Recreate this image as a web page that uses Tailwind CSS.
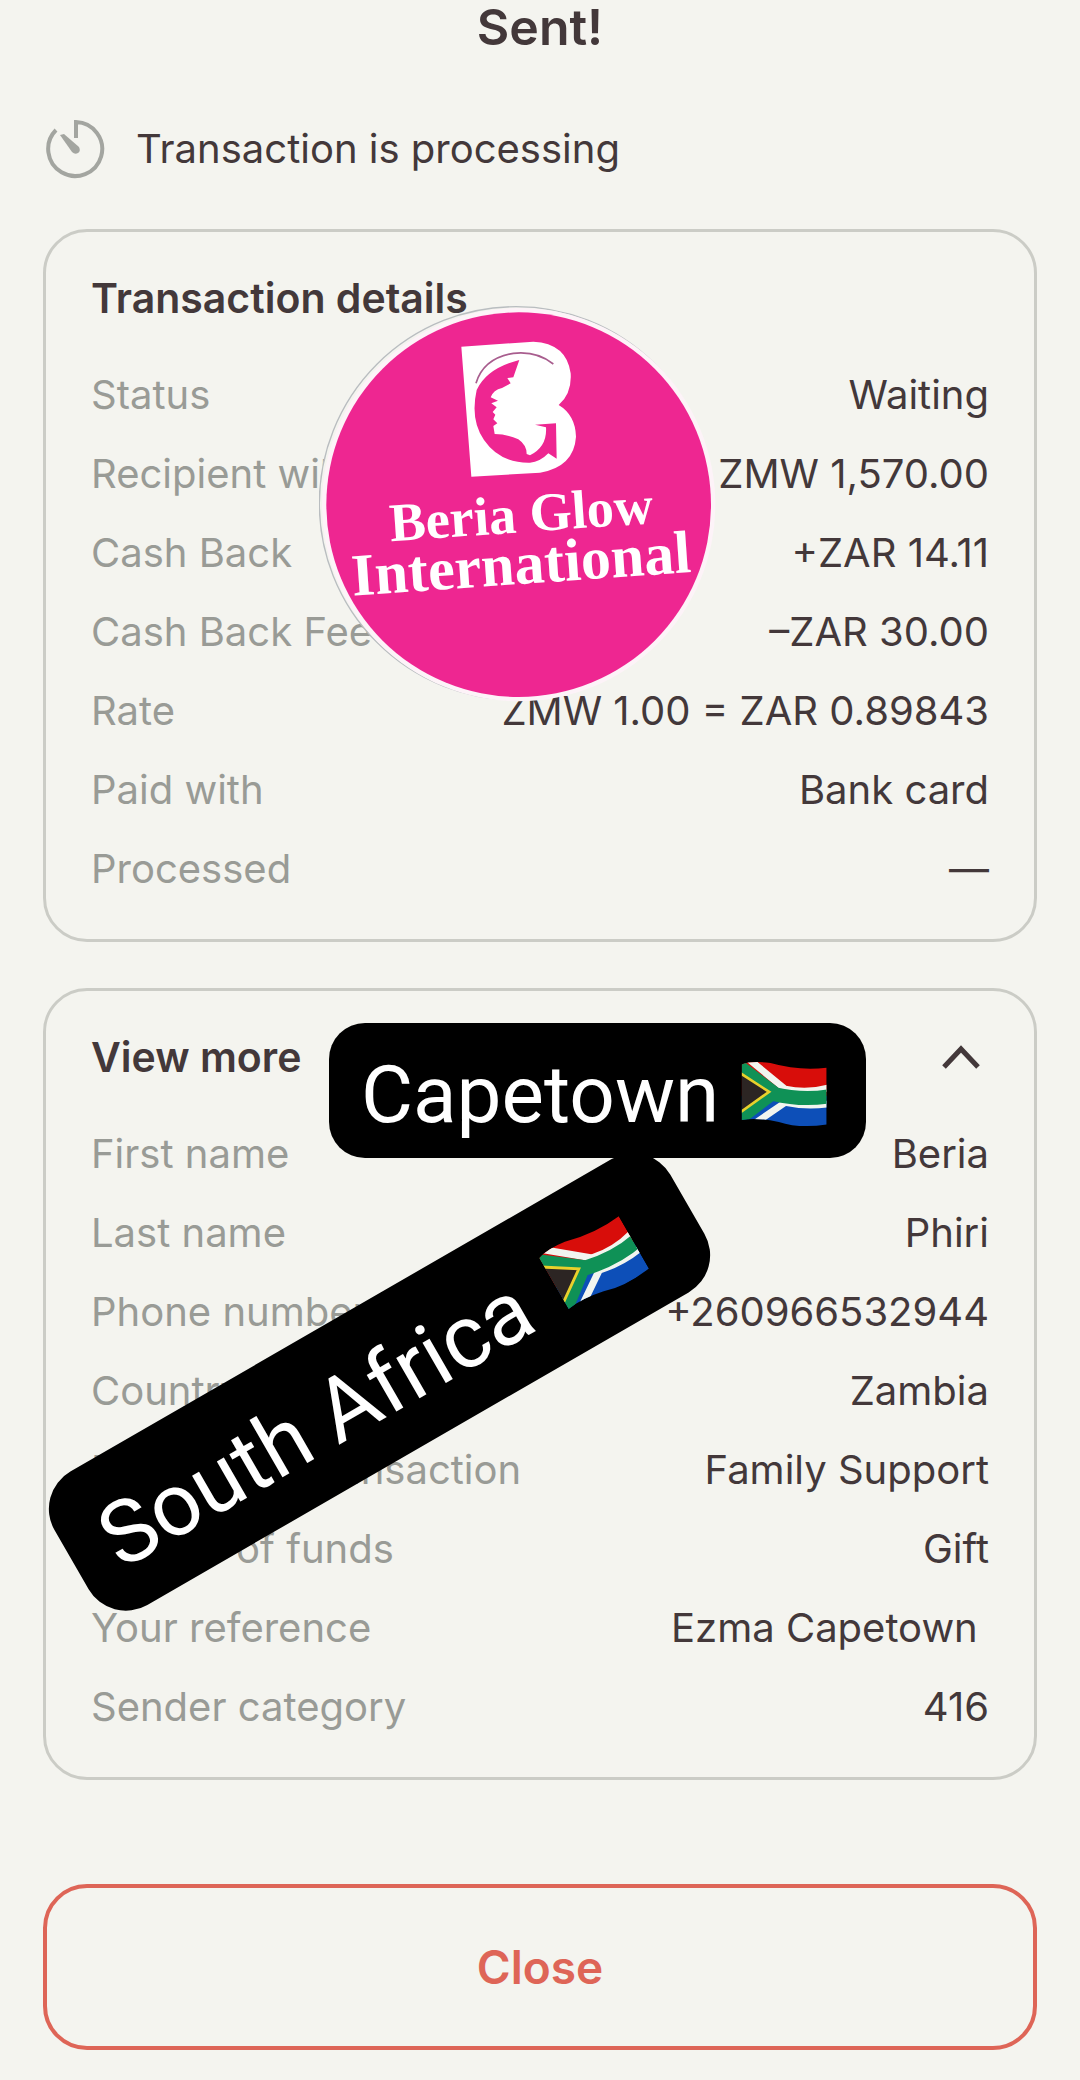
<!DOCTYPE html>
<html lang="en">
  <head>
    <meta charset="UTF-8" />
    <meta name="viewport" content="width=device-width, initial-scale=1.0" />
    <title>Sent!</title>
    <script src="https://cdn.jsdelivr.net/npm/@tailwindcss/browser@4"></script>
  </head>
  <body class="font-[Inter,sans-serif] bg-[#f4f4ef] text-[#43383a] text-[40px]">
    <svg class="absolute size-0" aria-hidden="true">
      <clipPath id="flag-shape">
        <path d="M64 76Q96 64 150 72Q235 96 318 86V256Q235 268 175 248Q110 234 64 242Z" />
      </clipPath>
      <symbol id="flag-za" viewBox="62 66 260 200">
        <g clip-path="url(#flag-shape)">
          <rect x="60" y="60" width="264" height="110" fill="#d80d0a" />
          <rect x="60" y="170" width="264" height="100" fill="#0d4fb8" />
          <path d="M80 56L194 150Q260 164 324 146M80 268L194 190Q260 204 324 194" fill="none" stroke="#f2f5ef" stroke-width="20" />
          <path d="M50 78L158 160L50 242M158 164Q250 186 330 170" fill="none" stroke="#0f9156" stroke-width="42" />
          <path d="M56 100L146 158L56 222Z" fill="#2c2523" stroke="#e8d02c" stroke-width="8" />
        </g>
      </symbol>
    </svg>

    <main class="px-[43px] pb-[30px] overflow-hidden">
      <h1 class="text-center text-[50px] leading-[54px] font-semibold">Sent!</h1>

      <div class="mt-[65px] flex items-center gap-[30px] pl-[3px]">
        <svg class="size-[60px] shrink-0" viewBox="0 0 60 60" fill="none" stroke="#a3a5a0">
          <path stroke-width="4" d="M30 19V3A27 27 0 1 1 10 11" />
          <path fill="#a3a5a0" stroke="none" d="M14 16L18 15L33 28Q35 32 32 34Q29 36 26 33Z" />
        </svg>
        <p class="leading-[60px]">Transaction is processing</p>
      </div>

      <!-- Transaction details -->
      <section class="relative mt-[50px] rounded-[44px] border-3 border-[#cbccc6] px-[45px] pt-[28px] pb-[31px]">
        <h2 class="mb-[19px] text-[41px] leading-[76px] font-semibold">Transaction details</h2>
        <dl class="leading-[79px]">
          <div class="flex justify-between"><dt class="text-[#999b96]">Status</dt><dd>Waiting</dd></div>
          <div class="flex justify-between"><dt class="text-[#999b96]">Recipient will get</dt><dd>ZMW 1,570.00</dd></div>
          <div class="flex justify-between"><dt class="text-[#999b96]">Cash Back</dt><dd>+ZAR 14.11</dd></div>
          <div class="flex justify-between"><dt class="text-[#999b96]">Cash Back Fee</dt><dd>–ZAR 30.00</dd></div>
          <div class="flex justify-between"><dt class="text-[#999b96]">Rate</dt><dd>ZMW 1.00 = ZAR 0.89843</dd></div>
          <div class="flex justify-between"><dt class="text-[#999b96]">Paid with</dt><dd>Bank card</dd></div>
          <div class="flex justify-between"><dt class="text-[#999b96]">Processed</dt><dd>—</dd></div>
        </dl>

        <!-- Round logo sticker -->
        <svg class="absolute top-[73px] left-[273px] size-[400px]" viewBox="57 45 1200 1200">
          <circle cx="648" cy="640" r="590" fill="#f4f4ef" stroke="#b9bdc0" stroke-width="4" />
          <circle cx="656" cy="644" r="590" fill="#fdf3f8" />
          <circle cx="656" cy="644" r="577" fill="#ee2691" />
          <path fill="#fff" d="M484 170L700 155Q800 160 812 250Q816 310 776 345Q826 375 828 440Q822 530 720 548L514 560Z" />
          <path fill="#ee2691" d="M658 210Q560 235 530 300Q510 390 552 450Q600 520 690 518Q720 516 745 490L770 506L768 400L705 404L738 412Q742 470 690 496L680 492Q680 465 655 448Q620 432 584 432L580 408L592 400L580 388L586 374L578 366L590 352L574 340L594 332L572 322Q580 300 606 294L632 280L622 264L640 262Z" />
          <path fill="none" stroke="#a85d8e" stroke-width="5" d="M528 280Q550 205 640 190Q710 182 760 222" />
          <g fill="#fff" font-family="Liberation Serif, serif" font-weight="700">
            <text font-size="163" transform="translate(272 754) rotate(-4)">Beria Glow</text>
            <text font-size="180" transform="translate(158 917) rotate(-4)">International</text>
          </g>
        </svg>
      </section>

      <!-- View more -->
      <section class="relative mt-[46px] rounded-[44px] border-3 border-[#cbccc6] px-[45px] pt-[28px] pb-[31px]">
        <h2 class="mb-[19px]">
          <button type="button" aria-expanded="true" class="flex w-full items-center justify-between pr-[8px] text-[41px] leading-[76px] font-semibold">
            View more
            <svg class="h-[26px] w-[40px]" viewBox="0 0 40 26" fill="none" stroke="currentColor" stroke-width="5">
              <path d="M3 23L20 5L37 23" />
            </svg>
          </button>
        </h2>
        <dl class="leading-[79px]">
          <div class="flex justify-between"><dt class="text-[#999b96]">First name</dt><dd>Beria</dd></div>
          <div class="flex justify-between"><dt class="text-[#999b96]">Last name</dt><dd>Phiri</dd></div>
          <div class="flex justify-between"><dt class="text-[#999b96]">Phone number</dt><dd>+260966532944</dd></div>
          <div class="flex justify-between"><dt class="text-[#999b96]">Country</dt><dd>Zambia</dd></div>
          <div class="flex justify-between"><dt class="text-[#999b96]">Purpose of transaction</dt><dd>Family Support</dd></div>
          <div class="flex justify-between"><dt class="text-[#999b96]">Source of funds</dt><dd>Gift</dd></div>
          <div class="flex justify-between"><dt class="text-[#999b96]">Your reference</dt><dd>Ezma Capetown&nbsp;</dd></div>
          <div class="flex justify-between"><dt class="text-[#999b96]">Sender category</dt><dd>416</dd></div>
        </dl>

        <!-- Place stickers -->
        <div class="absolute top-[32px] left-[283px] flex h-[135px] w-[537px] items-center justify-between rounded-[36px] bg-black pt-[8px] pr-[38px] pl-[32px] font-[Roboto,sans-serif] text-[80px] whitespace-nowrap text-white">
          Capetown
          <svg class="h-[67px] w-[87px]"><use href="#flag-za" /></svg>
        </div>
        <div class="absolute top-[314px] left-[-22px] flex h-[154px] w-[711px] -rotate-30 items-center justify-between rounded-[43px] bg-black pt-[8px] pr-[64px] pl-[38px] font-[Roboto,sans-serif] text-[88px] whitespace-nowrap text-white">
          South Africa
          <svg class="h-[71px] w-[92px]"><use href="#flag-za" /></svg>
        </div>
      </section>

      <button type="button" class="mt-[104px] h-[166px] w-full rounded-[44px] border-4 border-[#de6557] text-[46px] font-semibold text-[#de6557]">Close</button>
    </main>
  </body>
</html>
